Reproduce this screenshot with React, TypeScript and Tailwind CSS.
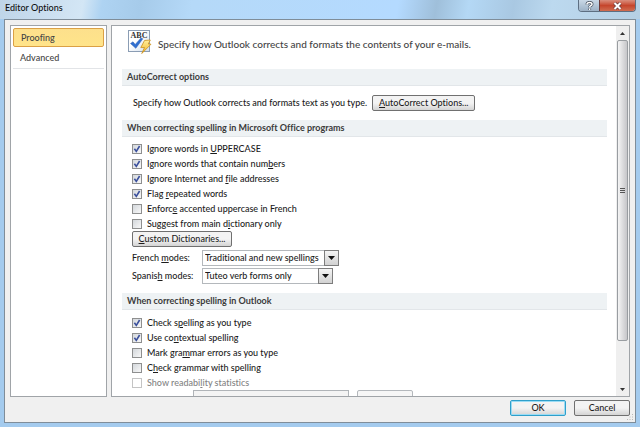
import { useState } from "react"
import type { ReactNode } from "react"

const programChecks = [
    { id: "upper", label: "Ignore words in &UPPERCASE", on: true },
    { id: "numbers", label: "Ignore words that contain num&bers", on: true },
    { id: "internet", label: "Ignore Internet and &file addresses", on: true },
    { id: "repeated", label: "Flag &repeated words", on: true },
    { id: "accented", label: "Enforc&e accented uppercase in French", on: false },
    { id: "main", label: "Suggest from main d&ictionary only", on: false },
]

const outlookChecks = [
    { id: "typing", label: "Check s&pelling as you type", on: true },
    { id: "context", label: "Use co&ntextual spelling", on: true },
    { id: "grammar", label: "Mark gra&mmar errors as you type", on: false },
    { id: "check", label: "C&heck grammar with spelling", on: false },
    { id: "stats", label: "Show readabi&lity statistics", on: false, disabled: true },
]

// "&" goes before the access key letter
function Mnemonic({ text }: { text: string }) {
    const at = text.indexOf("&")
    if (at < 0) return <>{text}</>
    return (
        <span>
            {text.slice(0, at)}
            <span className="underline">{text[at + 1]}</span>
            {text.slice(at + 2)}
        </span>
    )
}

function SectionTitle({ children }: { children: ReactNode }) {
    return (
        <h2 className="flex h-[17px] shrink-0 items-center border-b border-[#e2e6e9] bg-[#eef2f4] px-[5px] font-bold text-[#3b3b3b]">
            {children}
        </h2>
    )
}

type CheckProps = { id: string; label: string; on: boolean; disabled?: boolean }

function Check({ id, label, on, disabled }: CheckProps) {
    const [checked, setChecked] = useState(on)
    return (
        <div className="flex h-[15px] items-center gap-[5px]">
            <span className="grid size-[10px] shrink-0">
                <input
                    id={id}
                    type="checkbox"
                    checked={checked}
                    disabled={disabled}
                    onChange={(e) => setChecked(e.target.checked)}
                    className="col-start-1 row-start-1 size-[10px] appearance-none border border-[#8e8f8f] bg-linear-to-br from-[#d3d7db] to-[#f8f8f8] disabled:border-[#c4c4c4] disabled:from-white disabled:to-white"
                />
                {checked && (
                    <svg viewBox="0 0 10 10" className="pointer-events-none col-start-1 row-start-1 size-[10px]" fill="none" stroke="#3a4f9c" strokeWidth="1.6">
                        <path d="M2.4 4.8 4.3 7.4 7.6 2" />
                    </svg>
                )}
            </span>
            <label htmlFor={id} className={disabled ? "text-[#838383]" : ""}>
                <Mnemonic text={label} />
            </label>
        </div>
    )
}

function PushButton({ text, className }: { text: string; className: string }) {
    return (
        <button className={`flex h-4 shrink-0 items-center justify-center rounded-xs border bg-linear-to-b from-[#f3f3f3] from-50% to-[#d4d4d4] whitespace-nowrap ${className}`}>
            <Mnemonic text={text} />
        </button>
    )
}

function Combo({ id, label, value, width }: { id: string; label: string; value: string; width: string }) {
    return (
        <div className="flex h-[18px] items-center">
            <label htmlFor={id} className="w-[70px] shrink-0">
                <Mnemonic text={label} />
            </label>
            <div className={`relative h-4 ${width}`}>
                <select id={id} className="block h-full w-full appearance-none border border-[#b4b8bc] bg-white pl-[2px]">
                    <option>{value}</option>
                </select>
                <span className="pointer-events-none absolute inset-y-0 right-0 flex w-[15px] items-center justify-center border border-[#7d7d7d] bg-linear-to-b from-[#f4f4f4] to-[#d2d2d2]">
                    <svg viewBox="0 0 7 4" className="h-1 w-[7px]"><path d="M0 0h7L3.5 4z" fill="#111" /></svg>
                </span>
            </div>
        </div>
    )
}

function ProofingIcon() {
    return (
        <svg viewBox="0 0 25 25" className="size-[25px] shrink-0">
            <defs>
                <linearGradient id="page" x1="0" y1="0" x2="1" y2="1">
                    <stop offset="0.4" stopColor="#ffffff" />
                    <stop offset="1" stopColor="#cfdcec" />
                </linearGradient>
                <linearGradient id="bolt" x1="0" y1="0" x2="0" y2="1">
                    <stop offset="0" stopColor="#fff0a0" />
                    <stop offset="1" stopColor="#f2b422" />
                </linearGradient>
            </defs>
            <rect x="0.5" y="0.5" width="21" height="21" fill="url(#page)" stroke="#8b9db4" />
            <text x="11" y="8" textAnchor="middle" fontFamily="Liberation Serif, serif" fontWeight="bold" fontSize="8" fill="#333">ABC</text>
            <path d="M2.5 13.5 5 11.8 7.2 14.5 13 8l1.8.8L7.8 18.3z" fill="#2f6fd0" stroke="#2459b5" strokeWidth="0.5" />
            <path d="M16.5 10.5 22.3 10 20.3 14 23 14.2 13.8 23.5 16.5 17.5 12.8 17.6z" fill="url(#bolt)" stroke="#c98f1c" strokeWidth="0.8" />
        </svg>
    )
}

function TitleBar() {
    return (
        <header className="flex h-[19px] shrink-0 items-start justify-between bg-[linear-gradient(100deg,#bfd5e8_0%,#d3e6f5_13%,#aed3f2_16%,#a6cbea_22%,#b5d9f8_30%,#b4daff_62%,#9fbfda_68%,#b4d8f5_73%,#a9c8e2_80%,#bcd9ef_86%,#b5cfe3_100%)] pr-[4px] pl-[5px]">
            <h1 className="leading-4 text-[#111]">Editor Options</h1>
            <div className="flex h-3 overflow-hidden rounded-b-sm border border-t-0 border-[#5d6f82]">
                <button aria-label="Help" className="flex w-5 items-center justify-center bg-linear-to-b from-[#c9d8e6] to-[#9db2c6]">
                    <svg viewBox="0 0 9 10" className="h-[10px] w-[9px]" fill="none">
                        <path d="M2 3.5C2 .8 7 .8 7 3.2 7 4.8 4.6 4.6 4.6 6.2M4.6 7.5v1.6" stroke="#4c5664" strokeWidth="3" />
                        <path d="M2 3.5C2 .8 7 .8 7 3.2 7 4.8 4.6 4.6 4.6 6.2M4.6 7.5v1.6" stroke="#fff" strokeWidth="1.5" />
                    </svg>
                </button>
                <button aria-label="Close" className="flex w-9 items-center justify-center border-l border-[#6b3a3a] bg-linear-to-b from-[#d98d7c] via-[#c5452c] to-[#cf6c50]">
                    <svg viewBox="0 0 9 8" className="h-2 w-[9px]" fill="none">
                        <path d="M1.5 1 7.5 7M7.5 1 1.5 7" stroke="#63383a" strokeWidth="3.4" />
                        <path d="M1.5 1 7.5 7M7.5 1 1.5 7" stroke="#fff" strokeWidth="2" />
                    </svg>
                </button>
            </div>
        </header>
    )
}

function ScrollBar() {
    return (
        <div className="flex w-[13px] shrink-0 flex-col bg-[#efefef]">
            <button aria-label="Scroll up" className="flex h-[14px] shrink-0 items-center justify-center">
                <svg viewBox="0 0 5 3" className="h-[3px] w-[5px]"><path d="M2.5 0 5 3H0z" fill="#333" /></svg>
            </button>
            <div className="flex-1">
                <div className="mx-px flex h-[88%] flex-col items-center justify-center gap-px rounded-xs border border-[#999da1] bg-linear-to-r from-[#f5f5f5] to-[#c6c6c9]">
                    <span className="h-px w-[5px] bg-[#555]" />
                    <span className="h-px w-[5px] bg-[#555]" />
                    <span className="h-px w-[5px] bg-[#555]" />
                </div>
            </div>
            <button aria-label="Scroll down" className="flex h-[14px] shrink-0 items-center justify-center">
                <svg viewBox="0 0 5 3" className="h-[3px] w-[5px]"><path d="M0 0h5L2.5 3z" fill="#333" /></svg>
            </button>
        </div>
    )
}

function App() {
    return (
        <div className="flex h-screen flex-col bg-[#a4cbee] font-['Lato','Open_Sans',sans-serif] text-[9px] leading-3 font-medium text-[#1c1c1c] [font-variant-ligatures:none]">
            <TitleBar />
            <div className="mx-[4px] mb-[4px] flex min-h-0 flex-1 flex-col border border-[#7f8d99] bg-[#f0f0f0] px-[5px] pt-[5px]">
                <div className="flex min-h-0 flex-1 gap-[4px]">
                    <nav className="w-[97px] shrink-0 border border-[#a0a4a8] bg-white p-[2px] text-[#444]">
                        <a href="#proofing" className="flex h-[19px] items-center rounded-xs border border-[#dba045] bg-linear-to-b from-[#fde08c] to-[#ffe48a] px-[7px]">Proofing</a>
                        <a href="#advanced" className="flex h-[22px] items-center border-b border-[#e2e4e7] px-[7px]">Advanced</a>
                    </nav>
                    <main className="flex min-w-0 flex-1 border border-[#a0a4a8] bg-white">
                        <div className="flex min-w-0 flex-1 flex-col overflow-hidden pr-[9px] pl-[10px]">
                            <div className="flex h-[43px] shrink-0 items-start gap-[5px] pt-1 pl-[6px]">
                                <ProofingIcon />
                                <p className="pt-[8px] text-[10px] text-[#444]">Specify how Outlook corrects and formats the contents of your e-mails.</p>
                            </div>
                            <SectionTitle>AutoCorrect options</SectionTitle>
                            <div className="flex h-[34px] shrink-0 items-center gap-[5px] pl-[11px]">
                                <span>Specify how Outlook corrects and formats text as you type.</span>
                                <PushButton text="&AutoCorrect Options..." className="w-[103px] border-[#707070]" />
                            </div>
                            <SectionTitle>When correcting spelling in Microsoft Office programs</SectionTitle>
                            <div className="shrink-0 pt-1 pb-2 pl-[10px]">
                                {programChecks.map((c) => <Check key={c.id} {...c} />)}
                                <PushButton text="&Custom Dictionaries..." className="mb-[2px] w-[100px] border-[#707070]" />
                                <Combo id="french" label="French &modes:" value="Traditional and new spellings" width="w-[137px]" />
                                <Combo id="spanish" label="Spanis&h modes:" value="Tuteo verb forms only" width="w-[131px]" />
                            </div>
                            <SectionTitle>When correcting spelling in Outlook</SectionTitle>
                            <div className="shrink-0 pt-[5px] pl-[10px]">
                                {outlookChecks.map((c) => <Check key={c.id} {...c} />)}
                            </div>
                            <div className="flex h-4 shrink-0 gap-2 pl-[71px]">
                                <select disabled aria-label="Writing style" className="w-[156px] appearance-none border border-[#b0b4b8] bg-[#f4f4f4]" />
                                <button disabled aria-label="Settings" className="w-14 rounded-xs border border-[#b4b8bc] bg-[#f6f6f6]" />
                            </div>
                        </div>
                        <ScrollBar />
                    </main>
                </div>
                <footer className="relative flex h-[25px] shrink-0 items-start justify-end gap-2 pt-[3px]">
                    <PushButton text="OK" className="w-14 border-[#2f9fca] ring-1 ring-[#9adcf5] ring-inset" />
                    <PushButton text="Cancel" className="w-14 border-[#707070]" />
                    <svg viewBox="0 0 7 7" className="absolute -right-1 bottom-px size-[7px]" fill="#b8b8b8">
                        <path d="M5 0h1v1H5zM5 2.5h1v1H5zM2.5 2.5h1v1h-1zM5 5h1v1H5zM2.5 5h1v1h-1zM0 5h1v1H0z" />
                    </svg>
                </footer>
            </div>
        </div>
    )
}

export default App
